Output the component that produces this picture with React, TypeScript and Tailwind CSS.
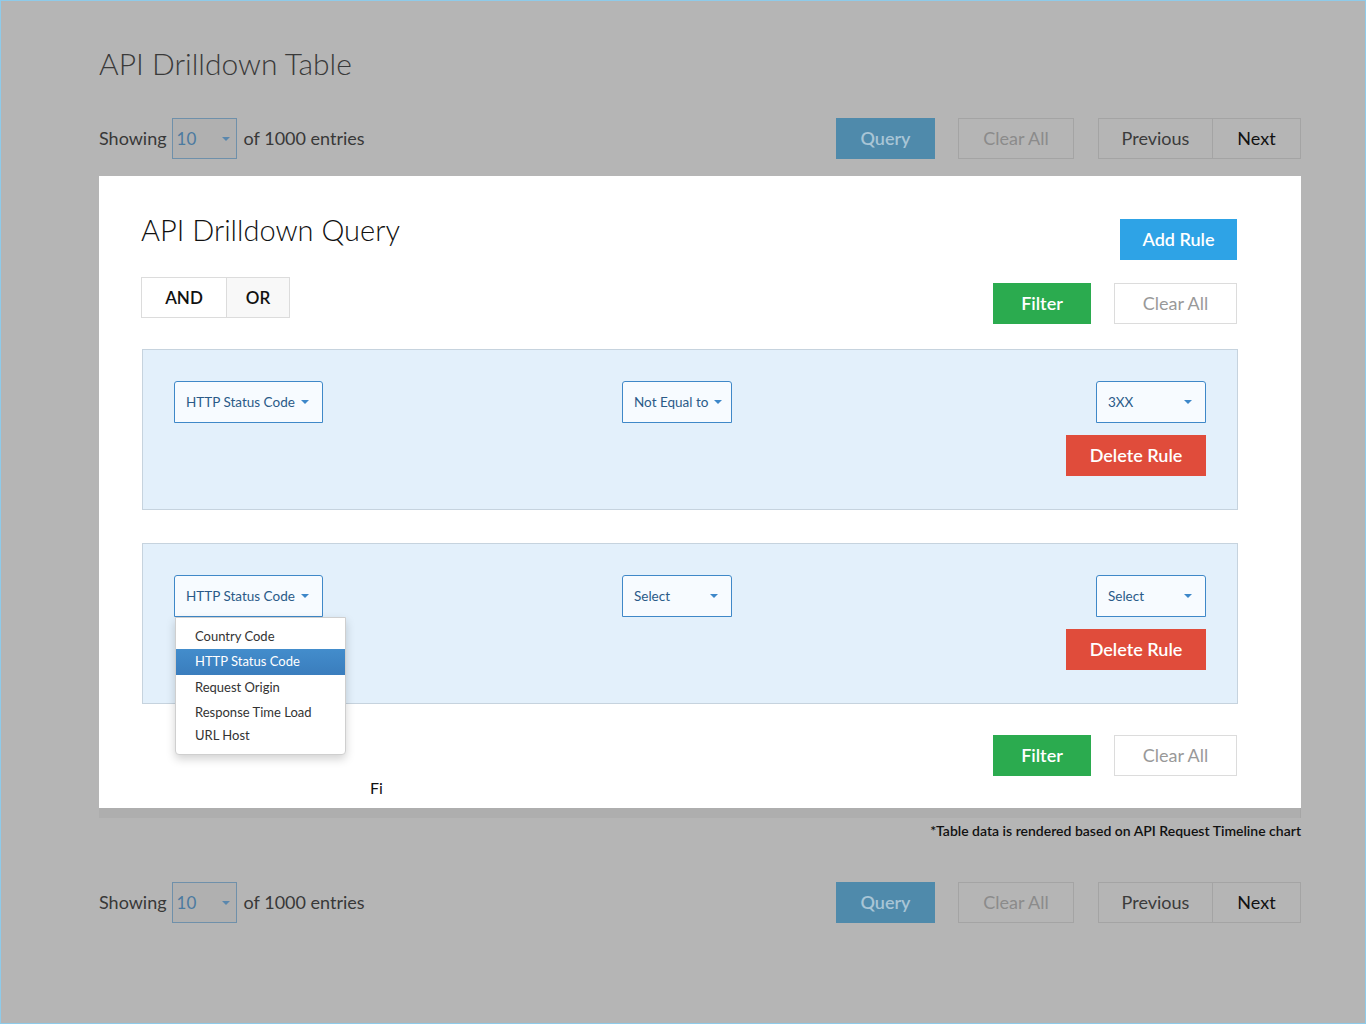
import { useState } from 'react'

const font = { fontFamily: 'Lato, "Noto Sans", sans-serif' }

function Caret({ className = 'border-t-[#3d87c9]' }: { className?: string }) {
  return <span className={`inline-block shrink-0 w-0 h-0 border-l-[4px] border-r-[4px] border-t-[4px] border-l-transparent border-r-transparent ${className}`} />
}

function RuleSelect({ label, width, open }: { label: string; width: string; open?: boolean }) {
  return (
    <div className="relative">
      <div
        className={`${width} h-[42px] flex items-center justify-between gap-[6px] pl-[11px] pr-[13px] bg-[#f7fbff] border border-[#3f88c8] rounded-t-[3px] text-[13.5px] text-[#2a5a88] whitespace-nowrap`}
      >
        <span>{label}</span>
        <Caret />
      </div>
      {open && (
        <div className="absolute left-[1px] top-[42px] w-[171px] bg-white border border-[#cfcfcf] rounded-b-[4px] shadow-[0_4px_10px_rgba(0,0,0,0.18)] py-[7px] text-[13px] text-[#333] z-10">
          <div className="h-[24px] flex items-center pl-[19px]">Country Code</div>
          <div className="h-[26px] flex items-center pl-[19px] text-white bg-gradient-to-b from-[#438dcc] to-[#3a7dbd]">HTTP Status Code</div>
          <div className="h-[26px] flex items-center pl-[19px]">Request Origin</div>
          <div className="h-[24px] flex items-center pl-[19px]">Response Time Load</div>
          <div className="h-[22px] flex items-center pl-[19px]">URL Host</div>
        </div>
      )}
    </div>
  )
}

function RulePanel({ field, op, value, open }: { field: string; op: string; value: string; open?: boolean }) {
  return (
    <div className="ml-[1px] w-[1096px] h-[161px] bg-[#e3f0fb] border border-[#c6d3de] pt-[31px] pl-[31px] pr-[31px] flex items-start">
      <div className="w-[448px]">
        <RuleSelect label={field} width="w-[149px]" open={open} />
      </div>
      <RuleSelect label={op} width="w-[110px]" />
      <div className="flex-1" />
      <div className="flex flex-col items-end gap-[12px]">
        <RuleSelect label={value} width="w-[110px]" />
        <button className="w-[140px] h-[41px] bg-[#e04c3b] text-white text-[18px] font-semibold">Delete Rule</button>
      </div>
    </div>
  )
}

function FilterRow() {
  return (
    <div className="flex justify-end gap-[23px]">
      <button className="w-[98px] h-[41px] bg-[#2bab4f] text-white text-[18px] font-semibold">Filter</button>
      <button className="w-[123px] h-[41px] bg-white border border-[#dcdcdc] text-[#999] text-[18px]">Clear All</button>
    </div>
  )
}

function ControlsRow() {
  return (
    <div className="h-[41px] flex items-center">
      <span className="text-[18px] text-[#383838] mr-[5px]">Showing</span>
      <div className="w-[65px] h-[41px] border border-[#6f90aa] bg-[#b0b0b0] flex items-center justify-between pl-[4px] pr-[6px] text-[17px] text-[#4b7aa0]">
        <span>10</span>
        <Caret className="border-t-[#5a87ad]" />
      </div>
      <span className="text-[18px] text-[#383838] ml-[7px]">of 1000 entries</span>
      <div className="flex-1" />
      <button className="w-[99px] h-[41px] bg-[#4f8aab] text-[#a8c5d6] text-[18px] font-semibold">Query</button>
      <button className="ml-[23px] w-[116px] h-[41px] border border-[#a4a4a4] text-[#8b8b8b] text-[18px]">Clear All</button>
      <div className="ml-[24px] flex h-[41px] border border-[#a4a4a4]">
        <button className="w-[114px] text-[18px] text-[#3b3b3b] border-r border-[#a4a4a4]">Previous</button>
        <button className="w-[87px] text-[18px] text-[#111]">Next</button>
      </div>
    </div>
  )
}

export default function App() {
  const [mode] = useState('AND')
  return (
    <div style={font} className="w-[1366px] h-[1024px] bg-[#b5b5b5] border border-[#8ecbea] overflow-hidden">
      <div className="pl-[98px] pr-[64px]">
        <h1 className="pt-[43px] h-[117px] text-[30px] font-light text-[#3a3a3a] leading-[38px]">API Drilldown Table</h1>
        <ControlsRow />

        <div className="mt-[17px] bg-white h-[632px] pl-[42px] pr-[64px] pt-[40px] relative">
          <div className="flex justify-between items-start">
            <h2 className="text-[29px] font-light text-[#111] leading-[32px] -mt-[2px]">API Drilldown Query</h2>
            <button className="mt-[3px] w-[117px] h-[41px] bg-[#2ea3e6] text-white text-[18px] font-semibold">Add Rule</button>
          </div>
          <div className="mt-[17px] flex justify-between items-start">
            <div className="flex h-[41px] border border-[#dcdcdc]">
              <button className={`w-[85px] text-[17px] font-semibold text-[#111] border-r border-[#dcdcdc] ${mode === 'AND' ? 'bg-white' : ''}`}>AND</button>
              <button className="w-[62px] text-[17px] font-semibold text-[#111] bg-[#f8f8f8]">OR</button>
            </div>
            <div className="mt-[6px]">
              <FilterRow />
            </div>
          </div>

          <div className="mt-[25px]">
            <RulePanel field="HTTP Status Code" op="Not Equal to" value="3XX" />
          </div>
          <div className="mt-[33px]">
            <RulePanel field="HTTP Status Code" op="Select" value="Select" open />
          </div>
          <div className="mt-[31px]">
            <FilterRow />
          </div>
          <div className="mt-[2px] pl-[229px] text-[16px] text-[#111] leading-[20px]">Fi</div>
        </div>
        <div className="h-[10px] bg-[#aeaeae] border-r border-[#a6a6a6]" />
        <div className="mt-[2px] text-right text-[14px] font-semibold text-[#111]">*Table data is rendered based on API Request Timeline chart</div>

        <div className="mt-[41px]">
          <ControlsRow />
        </div>
      </div>
    </div>
  )
}
